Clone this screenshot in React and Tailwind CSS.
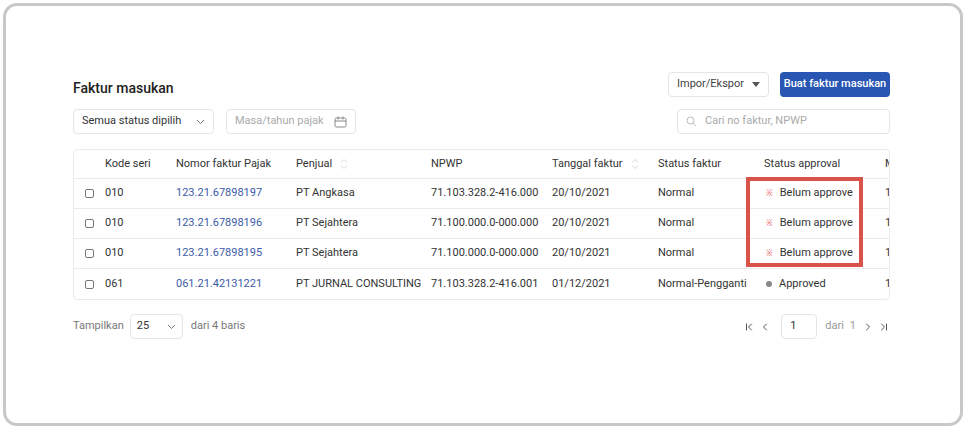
import React from "react";
import { ChevronFirst, ChevronLeft, ChevronRight, ChevronLast } from "lucide-react";

const rows = [
  ["010", "123.21.67898197", "PT Angkasa", "71.103.328.2-416.000", "20/10/2021", "Normal", false],
  ["010", "123.21.67898196", "PT Sejahtera", "71.100.000.0-000.000", "20/10/2021", "Normal", false],
  ["010", "123.21.67898195", "PT Sejahtera", "71.100.000.0-000.000", "20/10/2021", "Normal", false],
  ["061", "061.21.42131221", "PT JURNAL CONSULTING", "71.103.328.2-416.001", "01/12/2021", "Normal-Pengganti", true],
];

const Sort = () => (
  <svg width="8" height="12" viewBox="0 0 8 12" className="ml-2 inline-block"><path d="M1 4.5L4 1.5L7 4.5" stroke="#d1d5db" fill="none"/><path d="M1 7.5L4 10.5L7 7.5" stroke="#d1d5db" fill="none"/></svg>
);

export default function App() {
  const cols = "grid grid-cols-[31px_71px_120px_135px_121px_106px_106px_121px_1fr] items-center whitespace-nowrap";
  return (
    <div className="relative w-[966px] h-[429px] bg-white p-[3px]" style={{ fontFamily: "Roboto, 'Noto Sans', sans-serif" }}>
      <div className="w-full h-full rounded-[14px] border-[3px] border-[#c8c8c8] pl-[67px] pr-[70px] pt-[66px] text-[11px] text-[#333]">
        <div className="flex justify-between items-start">
          <div className="text-[14px] font-medium text-[#222] mt-[6px]">Faktur masukan</div>
          <div className="flex gap-[11px]">
            <div className="w-[101px] h-[25px] border border-[#e5e5e5] rounded flex items-center justify-between px-[8px] text-[#444]">Impor/Ekspor<svg width="8" height="5"><path d="M0 0h8L4 5z" fill="#555"/></svg></div>
            <div className="w-[110px] h-[25px] rounded bg-[#2956b3] text-white font-medium flex items-center justify-center">Buat faktur masukan</div>
          </div>
        </div>
        <div className="flex justify-between mt-[10px]">
          <div className="flex gap-[12px]">
            <div className="w-[141px] h-[25px] border border-[#e5e5e5] rounded flex items-center justify-between px-[8px]">Semua status dipilih<svg width="9" height="6"><path d="M1 1l3.5 3.5L8 1" stroke="#777" fill="none"/></svg></div>
            <div className="w-[130px] h-[25px] border border-[#e5e5e5] rounded flex items-center justify-between px-[8px] text-[#aaa]">Masa/tahun pajak
              <svg width="13" height="12" viewBox="0 0 13 12"><rect x="1" y="2" width="11" height="9" rx="1.5" stroke="#888" fill="none"/><path d="M1 5h11M4 0.5v3M9 0.5v3" stroke="#888"/></svg></div>
          </div>
          <div className="w-[213px] h-[25px] border border-[#e5e5e5] rounded flex items-center px-[8px] gap-[8px] text-[#aaa]">
            <svg width="11" height="11" viewBox="0 0 11 11"><circle cx="4.5" cy="4.5" r="3.5" stroke="#bbb" fill="none"/><path d="M7 7l3 3" stroke="#bbb"/></svg>Cari no faktur, NPWP
          </div>
        </div>
        <div className="mt-[15px] border border-[#ebebeb] rounded overflow-hidden">
          <div className={cols + " h-[29px] border-b border-[#ebebeb] text-[#333]"}>
            <div></div><div>Kode seri</div><div>Nomor faktur Pajak</div><div className="flex items-center">Penjual<Sort/></div><div>NPWP</div><div className="flex items-center">Tanggal faktur<Sort/></div><div>Status faktur</div><div>Status approval</div><div>M</div>
          </div>
          {rows.map((r, i) => (
            <div key={i} className={cols + " h-[30px] border-b border-[#ebebeb] last:border-b-0"}>
              <div className="flex justify-center"><div className="w-[9px] h-[9px] border border-[#777] rounded-[2px]"></div></div>
              <div>{r[0]}</div><div className="text-[#3b5ba8]">{r[1]}</div><div>{r[2]}</div><div>{r[3]}</div><div>{r[4]}</div><div>{r[5]}</div>
              <div className="flex items-center gap-[7px] pl-[2px]">
                {r[6] ? <span className="w-[6px] h-[6px] rounded-full bg-[#888]"></span> : <span className="text-[#e05a5a] text-[8px] leading-none">※</span>}
                {r[6] ? "Approved" : "Belum approve"}
              </div>
              <div>1</div>
            </div>
          ))}
        </div>
        <div className="flex justify-between items-center mt-[14px] text-[#777]">
          <div className="flex items-center gap-[6px]">Tampilkan
            <div className="w-[53px] h-[25px] border border-[#e5e5e5] rounded flex items-center justify-between px-[6px] text-[#333]">25<svg width="9" height="6"><path d="M1 1l3.5 3.5L8 1" stroke="#777" fill="none"/></svg></div>
            <span className="ml-[2px]">dari 4 baris</span></div>
          <div className="flex items-center gap-[4px] text-[#555]">
            <ChevronFirst size={12} /><ChevronLeft size={12} />
            <div className="ml-[6px] w-[36px] h-[25px] border border-[#e5e5e5] rounded flex items-center px-[8px] text-[#333]">1</div>
            <span className="ml-[4px] text-[#999]">dari</span><span className="ml-[2px] text-[#999]">1</span><ChevronRight size={12} className="ml-[2px]" /><ChevronLast size={12} />
          </div>
        </div>
      </div>
      <div className="absolute left-[746px] top-[177px] w-[117px] h-[90px] border-[4px] border-[#d9534a]"></div>
    </div>
  );
}
